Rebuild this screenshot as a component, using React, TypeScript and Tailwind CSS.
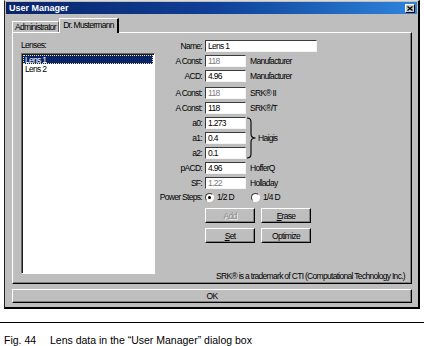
const ui = "font-['Liberation_Sans',Arial,sans-serif] text-[8.5px] leading-[10px] tracking-[-0.7px] text-black";

function Field({ value, gray, wide }: { value: string; gray?: boolean; wide?: boolean }) {
  return (
    <div
      className={`flex h-[12px] items-center border border-t-[#3a3a3a] border-l-[#3a3a3a] border-r-[#f4f4f4] border-b-[#f4f4f4] bg-white pl-[2px] ${
        wide ? "w-[112px]" : "w-[41px]"
      } ${gray ? "text-[#7a7a7a]" : "text-black"}`}
    >
      {value}
    </div>
  );
}

function Row({ label, value, note, gray, className = "" }: { label: string; value: string; note?: string; gray?: boolean; className?: string }) {
  return (
    <div className={`flex h-[12px] items-center ${className}`}>
      <div className="w-[50px] pr-[3px] text-right">{label}</div>
      <Field value={value} gray={gray} />
      {note && <div className="ml-[4px]">{note}</div>}
    </div>
  );
}

function Button({ children, disabled }: { children: React.ReactNode; disabled?: boolean }) {
  return (
    <div
      className={`flex h-[15px] w-[50px] items-center justify-center border border-t-white border-l-white border-r-black border-b-black bg-[#bebebe] shadow-[inset_-1px_-1px_0_#808080] ${
        disabled ? "text-[#8a8a8a] [text-shadow:1px_1px_0_#f2f2f2]" : ""
      }`}
    >
      {children}
    </div>
  );
}

function Radio({ checked }: { checked?: boolean }) {
  return (
    <div className="flex h-[9px] w-[9px] items-center justify-center rounded-full border border-t-[#3a3a3a] border-l-[#3a3a3a] border-r-white border-b-white bg-white">
      {checked && <div className="h-[3px] w-[3px] rounded-full bg-black" />}
    </div>
  );
}

export default function App() {
  return (
    <div className={`h-[346px] w-[424px] overflow-hidden bg-white ${ui}`}>
      {/* Window */}

      <div className="ml-[4px] flex w-[416px] flex-col border-t border-l border-r-2 border-b-2 border-t-[#dcdcdc] border-l-[#202020] border-r-black border-b-black bg-[#bebebe] pb-[4px]">
        {/* Title bar */}

        <div className="mx-[1px] mt-[1px] flex h-[12px] items-center justify-between bg-gradient-to-r from-[#0a246a] via-[#0f3f96] to-[#2f84dc] pl-[3px] pr-[2px]">
          <span className="text-[9px] font-bold tracking-normal text-white">User Manager</span>
          <div className="flex h-[9px] w-[10px] items-center justify-center border border-t-white border-l-white border-r-black border-b-black bg-[#c8c8c8]">
            <svg width="6" height="5" viewBox="0 0 6 5">
              <path d="M0.5 0.5 L5.5 4.5 M5.5 0.5 L0.5 4.5" stroke="#000" strokeWidth="1.3" />
            </svg>
          </div>
        </div>

        {/* Tabs */}

        <div className="mt-[4px] flex h-[14px] items-end pl-[7px]">
          <div className="flex h-[11px] w-[47px] items-center justify-center border-t border-l border-r border-t-white border-l-white border-r-[#606060]">
            Administrator
          </div>
          <div className="relative z-10 -mb-[1px] flex h-[15px] w-[60px] items-start justify-center border-t border-l border-r-2 border-t-white border-l-white border-r-black bg-[#bebebe] pt-[1px]">
            Dr. Mustermann
          </div>
        </div>

        {/* Panel */}

        <div className="ml-[7px] flex h-[252px] w-[400px] border border-t-white border-l-white border-r-black border-b-black pl-[8px] pt-[7px] shadow-[inset_-1px_-1px_0_#808080]">
          <div className="flex w-[134px] flex-col">
            <div>Lenses:</div>
            <div className="mt-[3px] h-[221px] border border-t-[#6a6a6a] border-l-[#6a6a6a] border-r-white border-b-white bg-white p-[1px] shadow-[inset_1px_1px_0_#1a1a1a]">
              <div className="flex h-[9px] items-center border border-dotted border-[#e8e890] bg-[#0a246a] pl-[1px] text-white">
                Lens 1
              </div>
              <div className="flex h-[9px] items-center pl-[2px]">Lens 2</div>
            </div>
          </div>

          <div className="flex flex-1 flex-col">
            <div className="flex flex-col gap-[3px]">
              <div className="flex h-[12px] items-center">
                <div className="w-[50px] pr-[3px] text-right">Name:</div>
                <Field value="Lens 1" wide />
              </div>
              <Row label="A Const:" value="118" note="Manufacturer" gray />
              <Row label="ACD:" value="4.96" note="Manufacturer" />
              <Row label="A Const:" value="118" note="SRK® II" gray className="mt-[2px]" />
              <Row label="A Const:" value="118" note="SRK®/T" />

              <div className="flex items-center">
                <div className="flex flex-col gap-[3px]">
                  <Row label="a0:" value="1.273" />
                  <Row label="a1:" value="0.4" />
                  <Row label="a2:" value="0.1" />
                </div>
                <svg width="11" height="42" viewBox="0 0 11 42" className="ml-[0px]">
                  <path
                    d="M1 1 Q5 1 5 5 L5 17 Q5 21 9.5 21 Q5 21 5 25 L5 37 Q5 41 1 41"
                    fill="none"
                    stroke="#000"
                    strokeWidth="1.1"
                  />
                </svg>
                <div className="ml-[1px]">Haigis</div>
              </div>

              <Row label="pACD:" value="4.96" note="HofferQ" />
              <Row label="SF:" value="1.22" note="Holladay" gray />
            </div>

            {/* Power steps */}

            <div className="mt-[3px] flex h-[10px] items-center">
              <div className="w-[50px] pr-[3px] text-right">Power Steps:</div>
              <Radio checked />
              <div className="ml-[3px] w-[34px]">1/2 D</div>
              <Radio />
              <div className="ml-[3px]">1/4 D</div>
            </div>

            {/* Buttons */}

            <div className="mt-[6px] ml-[50px] flex flex-col gap-[5px]">
              <div className="flex gap-[6px]">
                <Button disabled>Add</Button>
                <Button>
                  <span className="underline">E</span>rase
                </Button>
              </div>
              <div className="flex gap-[6px]">
                <Button>
                  <span className="underline">S</span>et
                </Button>
                <Button>Optimize</Button>
              </div>
            </div>

            <div className="mt-auto mb-[2px] pr-[6px] text-right">
              SRK® is a trademark of CTI (Computational Technology Inc.)
            </div>
          </div>
        </div>

        {/* OK */}

        <div className="ml-[7px] mt-[5px] flex h-[14px] w-[400px] items-center justify-center border border-t-white border-l-white border-r-black border-b-black shadow-[inset_-1px_-1px_0_#808080]">
          OK
        </div>
      </div>

      {/* Caption */}

      <div className="mt-[13px] h-px w-full bg-black" />
      <div className="mt-[11px] flex pl-[4px] text-[10.5px] leading-[12px] tracking-normal">
        <span className="w-[46px]">Fig. 44</span>
        <span>Lens data in the “User Manager” dialog box</span>
      </div>
    </div>
  );
}
